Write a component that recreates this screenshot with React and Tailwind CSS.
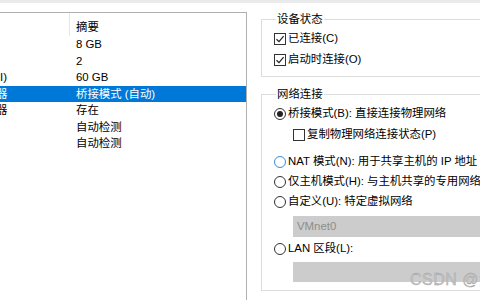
const FONT = { fontFamily: '"Liberation Sans", "Noto Sans CJK SC", sans-serif' };

const rows = [
  { left: "", value: "8 GB" },
  { left: "", value: "2" },
  { left: "I)", value: "60 GB", shift: "ml-0" },
  { left: "器", value: "桥接模式 (自动)", selected: true, shift: "ml-[-4px]" },
  { left: "器", value: "存在", shift: "ml-[-4px]" },
  { left: "", value: "自动检测" },
  { left: "", value: "自动检测" },
];

function Check({ checked }) {
  return (
    <span className="w-[12px] h-[12px] border border-[#333] bg-white flex items-center justify-center shrink-0">
      {checked && (
        <svg width="10" height="10" viewBox="0 0 10 10">
          <path d="M1.5 5.2 L4 7.6 L8.6 2.2" fill="none" stroke="#222" strokeWidth="1.2" />
        </svg>
      )}
    </span>
  );
}

function Radio({ checked, focus }) {
  return (
    <span
      className={
        "w-[12px] h-[12px] rounded-full border bg-white flex items-center justify-center shrink-0 " +
        (focus ? "border-[#3b8ad6]" : "border-[#333]")
      }
    >
      {checked && <span className="w-[6px] h-[6px] rounded-full bg-[#222]" />}
    </span>
  );
}

function Option({ children, className = "" }) {
  return <div className={"h-[20px] flex items-center gap-[2px] whitespace-nowrap " + className}>{children}</div>;
}

export default function App() {
  return (
    <div className="w-[480px] h-[300px] overflow-hidden bg-white flex flex-col text-[11.4px] text-black" style={FONT}>
      <div className="h-[3px] bg-[#ebebeb] shrink-0" />
      <div className="h-[9px] shrink-0" />
      <div className="flex flex-1 min-h-0">
        <div className="w-[247px] shrink-0 border-t border-r border-[#b0b0b0] overflow-hidden">
          <div className="h-[23px] flex">
            <div className="w-[70px] border-r border-[#e6e6e6]" />
            <div className="pl-[6px] pt-[6px] leading-[16px]">摘要</div>
          </div>
          {rows.map((r, i) => (
            <div
              key={i}
              className={
                "h-[16.5px] flex items-center leading-[16px] " +
                (r.selected ? "bg-[#0078d7] text-white" : "")
              }
            >
              <div className="w-[70px] overflow-hidden whitespace-nowrap">
                <span className={r.shift || ""}>{r.left}</span>
              </div>
              <div className="pl-[6px] whitespace-nowrap">{r.value}</div>
            </div>
          ))}
        </div>

        <div className="flex-1 relative overflow-hidden pl-[14px]">
          <fieldset className="w-[260px] border border-[#dcdcdc] pl-[12px] pt-[3px] pb-[6px]">
            <legend className="ml-[2px] px-[1px] leading-[14px]">设备状态</legend>
            <Option>
              <Check checked />
              <span>已连接(C)</span>
            </Option>
            <Option className="mt-[1px]">
              <Check checked />
              <span>启动时连接(O)</span>
            </Option>
          </fieldset>

          <fieldset className="w-[260px] mt-[10px] border border-[#dcdcdc] pl-[12px] pt-[3px] pb-[8px]">
            <legend className="ml-[2px] px-[1px] leading-[14px]">网络连接</legend>
            <Option>
              <Radio checked />
              <span>桥接模式(B): 直接连接物理网络</span>
            </Option>
            <Option className="mt-[1px] pl-[19px]">
              <Check />
              <span>复制物理网络连接状态(P)</span>
            </Option>
            <Option className="mt-[7px]">
              <Radio focus />
              <span>NAT 模式(N): 用于共享主机的 IP 地址</span>
            </Option>
            <Option>
              <Radio />
              <span>仅主机模式(H): 与主机共享的专用网络</span>
            </Option>
            <Option>
              <Radio />
              <span>自定义(U): 特定虚拟网络</span>
            </Option>
            <div className="ml-[19px] mt-[4px] h-[21px] bg-[#cccccc] flex items-center pl-[4px] text-[#8c8c8c]">
              VMnet0
            </div>
            <Option className="mt-[2px]">
              <Radio />
              <span>LAN 区段(L):</span>
            </Option>
            <div className="ml-[19px] mt-[3px] h-[20px] bg-[#cccccc]" />
          </fieldset>

          <div className="absolute left-[163px] top-[259px] text-[16px] leading-[18px] text-[#c4c4c4] whitespace-nowrap tracking-[0.5px]" style={{ ...FONT, WebkitTextStroke: "0.3px #9a9a9a" }}>
            CSDN @浅
          </div>
        </div>
      </div>
    </div>
  );
}
